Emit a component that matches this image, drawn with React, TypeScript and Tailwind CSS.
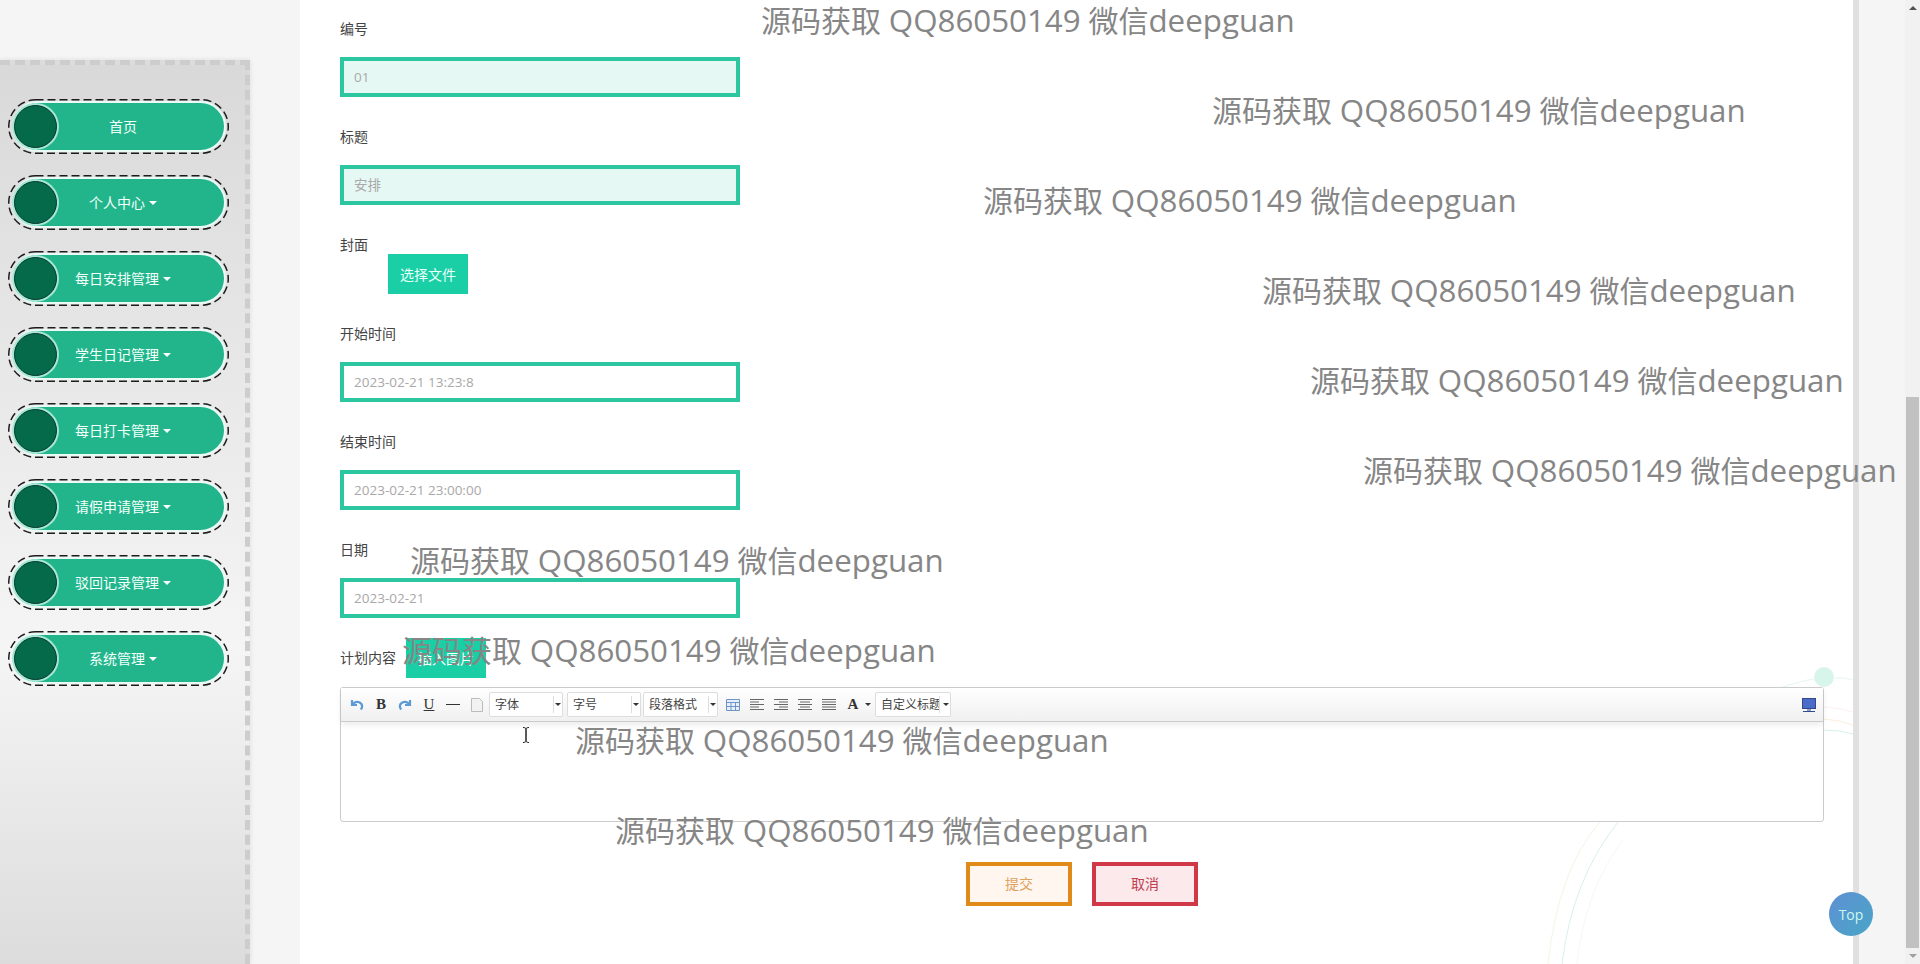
const FONT = "font-['Open_Sans','Noto_Sans_CJK_SC',sans-serif]";

const MENUS = [
  { label: '首页', caret: false },
  { label: '个人中心', caret: true },
  { label: '每日安排管理', caret: true },
  { label: '学生日记管理', caret: true },
  { label: '每日打卡管理', caret: true },
  { label: '请假申请管理', caret: true },
  { label: '驳回记录管理', caret: true },
  { label: '系统管理', caret: true },
];

const WATERMARKS = [
  'left-[761px] -top-[1px]',
  'left-[1212px] top-[89px]',
  'left-[983px] top-[179px]',
  'left-[1262px] top-[269px]',
  'left-[1310px] top-[359px]',
  'left-[1363px] top-[449px]',
  'left-[410px] top-[539px]',
  'left-[402px] top-[629px]',
  'left-[575px] top-[719px]',
  'left-[615px] top-[809px]',
];

function Caret() {
  return <span className="inline-block ml-1 mb-[3px] align-middle w-0 h-0 border-x-[4px] border-x-transparent border-t-[4px] border-t-white" />;
}

function NavPill({ label, caret }: { label: string; caret: boolean }) {
  return (
    <div className="relative w-[221px] h-[55px] ml-2 pt-[2px] pb-[2px] pl-[4px] pr-[3px]">
      <svg className="absolute left-0 top-0" width="221" height="55" fill="none">
        <rect x="0.75" y="0.75" width="219.5" height="53.5" rx="26.75" stroke="#1c1c1c" strokeWidth="1.5" strokeDasharray="8 4" />
      </svg>
      <div className="relative h-full rounded-full bg-[#22b58c] border-2 border-[#eafaf5] flex items-center justify-center pl-[8px] text-[14px] text-[#f2fffb]">
        <span>{label}{caret && <Caret />}</span>
      </div>
      <div className="absolute left-[6px] top-[6px] w-[43px] h-[43px] rounded-full bg-[#046a4a] border-[1.5px] border-[#04392a] shadow-[0_0_0_2px_#a6e6d4]" />
    </div>
  );
}

function Field({ label, value, filled }: { label: string; value: string; filled?: boolean }) {
  return (
    <div className="mb-[29px]">
      <div className="h-[20px] leading-[22px] text-[14px] text-[#444]">{label}</div>
      <div className={`mt-[19px] w-[400px] h-[40px] border-4 border-[#2cc7a0] ${filled ? 'bg-[#e6f8f3]' : 'bg-white'} pl-[10px] flex items-center text-[13.5px] text-[#a8a8a8]`}>
        {value}
      </div>
    </div>
  );
}

function Lines({ kind }: { kind: 'left' | 'right' | 'center' | 'justify' }) {
  const short = kind === 'left' ? [1, 10] : kind === 'right' ? [6, 15] : kind === 'center' ? [3, 13] : [1, 15];
  return (
    <svg width="16" height="16" viewBox="0 0 16 16" className="shrink-0">
      {[0, 1, 2, 3, 4].map(i => {
        const [a, b] = i % 2 ? short : [1, 15];
        return <line key={i} x1={a} x2={b} y1={2.5 + i * 2.5} y2={2.5 + i * 2.5} stroke="#666" strokeWidth="1" />;
      })}
    </svg>
  );
}

function ToolSelect({ label, w, caretW = 'w-[9px]' }: { label: string; w: string; caretW?: string }) {
  return (
    <div className={`${w} h-[25px] shrink-0 flex items-center bg-white border border-[#ddd] rounded-[2px] text-[12px] text-[#444]`}>
      <span className="flex-1 min-w-0 pl-[5px] whitespace-nowrap overflow-hidden">{label}</span>
      <span className={`${caretW} shrink-0 h-full flex items-center justify-end pr-[1px] relative`}>
        <span className="absolute left-0 top-[3px] bottom-[3px] w-px bg-[#ddd]" />
        <span className="w-0 h-0 border-x-[3px] border-x-transparent border-t-[3px] border-t-[#333]" />
      </span>
    </div>
  );
}

export default function App() {
  return (
    <div className={`${FONT} relative w-full h-[964px] overflow-hidden flex bg-[#f5f5f5]`}>
      <aside className="w-[300px] shrink-0 pt-[60px]">
        <div className="w-[250px] h-[904px] border-t-[5px] border-r-[5px] border-dashed border-[#cdcdcd] bg-gradient-to-b from-[#d9d9d9] via-[#f5f5f5] via-[65%] to-[#dcdcdc] pt-[34px] flex flex-col gap-[21px] shadow-[0_0_5px_rgba(0,0,0,0.1)]">
          {MENUS.map(m => <NavPill key={m.label} {...m} />)}
        </div>
      </aside>

      <main className="relative w-[1553px] shrink-0 bg-white pl-[40px] pt-[18px]">
        {/* faint arcs of the page background */}
        <svg className="absolute left-0 top-0 pointer-events-none" width="1553" height="964" fill="none">
          <circle cx="1524" cy="677" r="10" fill="#d8f5ec" />
          <path d="M1262 964 Q1272 880 1318 822" stroke="#d5f2ea" strokeWidth="1" />
          <path d="M1248 964 Q1258 870 1300 822" stroke="#f5f4e6" strokeWidth="1" />
          <path d="M1277 964 Q1285 890 1323 840" stroke="#f6f8f4" strokeWidth="1" />
          <path d="M1524 730 Q1540 730 1553 734" stroke="#d5f2ea" strokeWidth="1" />
          <path d="M1524 719 Q1540 720 1553 725" stroke="#fbeee0" strokeWidth="1" />
          <path d="M1524 707 Q1540 708 1553 712" stroke="#fcf0f0" strokeWidth="1" />
          <path d="M1480 688 Q1500 681 1514 679" stroke="#e5f6f1" strokeWidth="1" />
          <path d="M1535 678 Q1545 677 1553 680" stroke="#e5f6f1" strokeWidth="1" />
        </svg>

        <div className="relative">
          <Field label="编号" value="01" filled />
          <Field label="标题" value="安排" filled />
          <div className="mb-[29px]">
            <div className="h-[20px] leading-[22px] text-[14px] text-[#444]">封面</div>
            <button className="block ml-[48px] w-[80px] h-[40px] bg-[#1acfa5] text-[#eafffa] text-[14px]">选择文件</button>
          </div>
          <Field label="开始时间" value="2023-02-21 13:23:8" />
          <Field label="结束时间" value="2023-02-21 23:00:00" />
          <Field label="日期" value="2023-02-21" />

          <div className="flex items-start h-[40px] -mt-[9px]">
            <div className="mt-[9px] h-[20px] leading-[22px] text-[14px] text-[#444]">计划内容</div>
            <button className="ml-[10px] w-[80px] h-[40px] bg-[#1acfa5] text-white text-[14px]">插入图片</button>
          </div>

          <div className="mt-[9px] w-[1484px] h-[135px] border border-[#ccc] rounded-[3px] bg-white">
            <div className="h-[34px] flex items-center pl-[8px] pr-[6px] gap-[8px] border-b border-[#ccc] bg-gradient-to-b from-white to-[#f0f0f0] shadow-[0_3px_6px_rgba(0,0,0,0.08)]">
              <svg width="16" height="16" viewBox="0 0 16 16" className="shrink-0" fill="none">
                <path d="M3 3v5h5" stroke="#5b9bd5" strokeWidth="2.2" />
                <path d="M3.5 8C5 4.500 10 3.500 12.500 7c1 1.700.8 3.500-.7 5.500" stroke="#5b9bd5" strokeWidth="2.2" />
              </svg>
              <span className="w-[16px] shrink-0 text-center text-[15px] font-bold text-[#333] font-['Liberation_Serif',serif]">B</span>
              <svg width="16" height="16" viewBox="0 0 16 16" className="shrink-0" fill="none">
                <path d="M13 3v5H8" stroke="#5b9bd5" strokeWidth="2.2" />
                <path d="M12.500 8C11 4.500 6 3.500 3.500 7c-1 1.700-.8 3.500.7 5.500" stroke="#5b9bd5" strokeWidth="2.2" />
              </svg>
              <span className="w-[16px] shrink-0 text-center text-[15px] underline text-[#333] font-['Liberation_Serif',serif]">U</span>
              <span className="w-[14px] mx-px h-px bg-[#333] shrink-0" />
              <svg width="16" height="16" viewBox="0 0 16 16" className="shrink-0" fill="#f2f2f2" stroke="#bbb">
                <path d="M2.500 1.500h8l3 3v10h-11z" />
              </svg>
              <div className="flex -ml-[4px] mr-[-1px]">
                <ToolSelect label="字体" w="w-[74px]" />
                <div className="ml-[4px]"><ToolSelect label="字号" w="w-[74px]" /></div>
                <div className="ml-[2px]"><ToolSelect label="段落格式" w="w-[75px]" /></div>
              </div>
              <svg width="16" height="16" viewBox="0 0 16 16" className="shrink-0" fill="#e6effa" stroke="#6f94c8">
                <path d="M1.500 2.500h13v11h-13zM1.500 5.500h13M1.500 9.500h13M6 5.500v8M10.500 5.500v8" />
              </svg>
              <Lines kind="left" />
              <Lines kind="right" />
              <Lines kind="center" />
              <Lines kind="justify" />
              <span className="w-[26px] flex items-center shrink-0 text-[15px] text-[#333] font-['Liberation_Serif',serif] font-bold">
                <span className="w-[16px] text-center">A</span>
                <span className="ml-[4px] w-0 h-0 border-x-[3px] border-x-transparent border-t-[3px] border-t-[#333]" />
              </span>
              <div className="-ml-[4px]"><ToolSelect label="自定义标题" w="w-[76px]" caretW="w-[11px]" /></div>
              <svg width="16" height="16" viewBox="0 0 16 16" className="shrink-0 ml-auto" fill="none">
                <rect x="1.500" y="1.500" width="13" height="10" fill="#4a6cc8" stroke="#2f4a8a" />
                <path d="M6 13h4M2 14.500h12" stroke="#2f4a8a" />
              </svg>
            </div>
          </div>

          <div className="mt-[40px] ml-[626px] flex gap-[20px]">
            <button className="w-[106px] h-[44px] border-4 border-[#e08a1a] bg-[#fff7ef] pb-[2px] text-[14px] text-[#dfa060]">提交</button>
            <button className="w-[106px] h-[44px] border-4 border-[#d03848] bg-[#fbe9ec] pb-[2px] text-[14px] text-[#c04050]">取消</button>
          </div>
        </div>

        {/* text cursor left in the editor */}
        <svg className="absolute left-[222px] top-[727px]" width="8" height="16" fill="none" stroke="#222">
          <path d="M1 .5c1.500 0 3 .5 3 1.500v12c0 1-1.500 1.500-3 1.500M7 .5c-1.500 0-3 .5-3 1.500v12c0 1 1.500 1.500 3 1.500" />
        </svg>
      </main>

      <div className="w-[6px] shrink-0 bg-[#e0e0e0]" />
      <div className="w-[46px] shrink-0" />

      <div className="w-[15px] shrink-0 bg-[#f1f1f1] flex flex-col items-center">
        <div className="h-[16px] flex items-center justify-center">
          <span className="w-0 h-0 border-x-[4px] border-x-transparent border-b-[4px] border-b-[#505050]" />
        </div>
        <div className="mt-[381px] w-[13px] h-[551px] bg-[#c1c1c1]" />
        <div className="h-[16px] flex items-center justify-center">
          <span className="w-0 h-0 border-x-[4px] border-x-transparent border-t-[4px] border-t-[#a0a0a0]" />
        </div>
      </div>

      {WATERMARKS.map(pos => (
        <div key={pos} className={`absolute ${pos} whitespace-nowrap text-[30px] leading-[42px] text-[#868686] pointer-events-none`}>
          源码获取 <span className="text-[31.300px]">QQ86050149</span> 微信<span className="text-[31.300px]">deepguan</span>
        </div>
      ))}

      <button className="absolute left-[1829px] top-[892px] w-[44px] h-[44px] rounded-full bg-gradient-to-br from-[#5e8fd4] to-[#47a6c6] text-[#cdf8f0] text-[14px]">Top</button>
    </div>
  );
}
